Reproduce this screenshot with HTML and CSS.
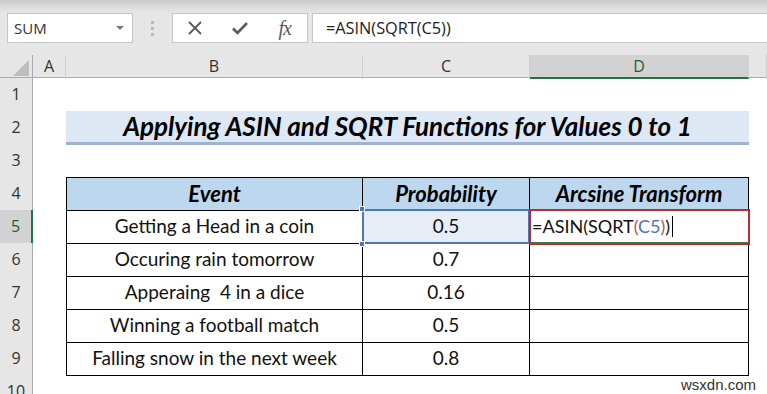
FILE: index.html
```html
<!DOCTYPE html>
<html>
<head>
	<meta charset="UTF-8">
	<title>ASIN and SQRT</title>
	<link rel="stylesheet" href="styles.css">
</head>
<body>
	<div class="toolbar">
		<div class="namebox">
			<span>SUM</span>
			<span class="caret"></span>
		</div>
		<div class="grip"><i></i><i></i><i></i></div>
		<div class="buttons">
			<svg width="14" height="14" viewBox="0 0 14 14"><path d="M1 1 L13 13 M13 1 L1 13" stroke="#5a5a5a" stroke-width="1.8" fill="none"/></svg>
			<svg width="16" height="14" viewBox="0 0 16 14"><path d="M1 7.5 L5.5 12 L15 2" stroke="#5a5a5a" stroke-width="2.6" fill="none"/></svg>
			<span class="fx">fx</span>
		</div>
		<div class="formula">=ASIN(SQRT(C5))</div>
	</div>

	<div class="sheet">
		<div class="row head">
			<div class="corner"><span></span></div>
			<div class="ch">A</div>
			<div class="ch">B</div>
			<div class="ch">C</div>
			<div class="ch active">D</div>
			<div class="ch"></div>
		</div>

		<div class="row">
			<div class="rh">1</div>
		</div>

		<div class="row">
			<div class="rh">2</div>
			<div></div>
			<div class="title">Applying ASIN and SQRT Functions for Values 0 to 1</div>
		</div>

		<div class="row">
			<div class="rh">3</div>
		</div>

		<div class="row">
			<div class="rh">4</div>
			<div></div>
			<div class="cell th first">Event</div>
			<div class="cell th">Probability</div>
			<div class="cell th">Arcsine Transform</div>
		</div>

		<div class="row">
			<div class="rh active">5</div>
			<div></div>
			<div class="cell first">Getting a Head in a coin</div>
			<div class="cell sel">0.5<b class="dot tl"></b><b class="dot bl"></b></div>
			<div class="cell edit">=ASIN(SQRT<span class="paren">(</span><span class="ref">C5</span><span class="paren">)</span>)<span class="cursor"></span></div>
		</div>

		<div class="row">
			<div class="rh">6</div>
			<div></div>
			<div class="cell first">Occuring rain tomorrow</div>
			<div class="cell">0.7</div>
			<div class="cell"></div>
		</div>

		<div class="row">
			<div class="rh">7</div>
			<div></div>
			<div class="cell first">Apperaing&nbsp; 4 in a dice</div>
			<div class="cell">0.16</div>
			<div class="cell"></div>
		</div>

		<div class="row">
			<div class="rh">8</div>
			<div></div>
			<div class="cell first">Winning a football match</div>
			<div class="cell">0.5</div>
			<div class="cell"></div>
		</div>

		<div class="row">
			<div class="rh">9</div>
			<div></div>
			<div class="cell first">Falling snow in the next week</div>
			<div class="cell">0.8</div>
			<div class="cell"></div>
		</div>

		<div class="row">
			<div class="rh">10</div>
		</div>

		<div class="watermark">wsxdn.com</div>
	</div>
</body>
</html>
```

FILE: styles.css
```css
* {
	box-sizing: border-box;
}

html, body {
	margin: 0;
	height: 394px;
	overflow: hidden;
}

body {
	background-color: #e6e6e6;
	font-family: "Open Sans", sans-serif;
	color: #222;
}

/* toolbar */

.toolbar {
	height: 55px;
	display: flex;
	align-items: flex-start;
	padding-top: 13px;
	padding-left: 7px;
	background: linear-gradient(#cacaca 0, #dedede 8px, #e6e6e6 13px);
}

.namebox {
	width: 126px;
	height: 30px;
	background-color: #fff;
	border: 1px solid #c6c6c6;
	display: flex;
	align-items: center;
	justify-content: space-between;
	padding: 0 8px 0 6px;
	font-size: 15px;
	color: #333;
}

.caret {
	width: 0;
	height: 0;
	border-left: 4px solid transparent;
	border-right: 4px solid transparent;
	border-top: 4px solid #7a7a7a;
}

.grip {
	width: 39px;
	height: 30px;
	display: flex;
	flex-direction: column;
	align-items: center;
	justify-content: center;
	gap: 3px;
}

.grip i {
	display: block;
	width: 3px;
	height: 3px;
	background-color: #b8b8b8;
}

.buttons {
	width: 136px;
	height: 30px;
	background-color: #fff;
	border: 1px solid #c6c6c6;
	display: flex;
	align-items: center;
	justify-content: space-between;
	padding: 0 16px 0 15px;
}

.fx {
	font-family: "Liberation Serif", serif;
	font-style: italic;
	font-size: 20px;
	color: #5a5a5a;
	letter-spacing: -1px;
}

.formula {
	flex: 1;
	height: 30px;
	margin-left: 4px;
	background-color: #fff;
	border: 1px solid #c6c6c6;
	border-right: none;
	padding-left: 13px;
	font-size: 16.3px;
	line-height: 28px;
	color: #222;
}

/* sheet */

.sheet {
	position: relative;
	background-color: #fff;
}

.row {
	display: grid;
	grid-template-columns: 33px 33px 297px 167px 219px 1fr;
	height: 33px;
}

.row.head {
	height: 23px;
	background-color: #e6e6e6;
	border-bottom: 1px solid #ababab;
}

.corner {
	position: relative;
	border-right: 1px solid #ababab;
}

.corner span {
	position: absolute;
	right: 3px;
	bottom: 3px;
	width: 0;
	height: 0;
	border-left: 16px solid transparent;
	border-bottom: 16px solid #bdbdbd;
}

.ch {
	text-align: center;
	font-size: 16px;
	line-height: 22px;
	color: #333;
	border-right: 1px solid #cfcfcf;
}

.ch.active {
	background-color: #d2d2d2;
	border-bottom: 2px solid #217346;
	color: #1e5e3a;
}

.rh {
	background-color: #e6e6e6;
	border-right: 1px solid #ababab;
	border-bottom: 1px solid #cfcfcf;
	text-align: center;
	font-size: 16px;
	line-height: 33px;
	color: #333;
}

.rh.active {
	background-color: #d2d2d2;
	border-right: 2px solid #217346;
	color: #1e5e3a;
}

.title {
	grid-column: 3 / 6;
	background-color: #dde8f4;
	border-bottom: 3px solid #9db3d3;
	text-align: center;
	font-family: Lato, sans-serif;
	font-weight: bold;
	font-style: italic;
	font-size: 26px;
	line-height: 31px;
	color: #000;
}

.cell {
	border-right: 1px solid #000;
	border-bottom: 1px solid #000;
	text-align: center;
	font-family: Lato, sans-serif;
	font-size: 19px;
	line-height: 32px;
	color: #111;
}

.cell.first {
	border-left: 1px solid #000;
}

.cell.th {
	border-top: 1px solid #000;
	background-color: #bdd7ee;
	font-weight: bold;
	font-style: italic;
	font-size: 22px;
	line-height: 31px;
	color: #000;
}

.cell.sel {
	position: relative;
	background-color: #e6edf7;
}

.cell.sel::after {
	content: "";
	position: absolute;
	top: -1px;
	left: -1px;
	right: -1px;
	bottom: -1px;
	border: 2px solid #4a76be;
}

.dot {
	position: absolute;
	z-index: 1;
	width: 6px;
	height: 6px;
	background-color: #4a76be;
	border: 1px solid #fff;
}

.dot.tl {
	top: -4px;
	left: -4px;
}

.dot.bl {
	bottom: -4px;
	left: -4px;
}

.cell.edit {
	position: relative;
	text-align: left;
	padding-left: 2px;
	font-size: 18px;
}

.cell.edit::after {
	content: "";
	position: absolute;
	top: -1px;
	left: -1px;
	right: -2px;
	bottom: -2px;
	border: 2px solid #b5302c;
	box-shadow: inset 0 -1px 0 #3f7a4a;
}

.paren {
	color: #c0504d;
}

.ref {
	color: #4a76be;
}

.cursor {
	display: inline-block;
	width: 1px;
	height: 21px;
	margin-left: 2px;
	vertical-align: -4px;
	background-color: #000;
}

.watermark {
	position: absolute;
	right: 11px;
	top: 321px;
	font-family: "Liberation Sans", sans-serif;
	font-size: 15px;
	color: #333;
	background-color: #fff;
}
```
